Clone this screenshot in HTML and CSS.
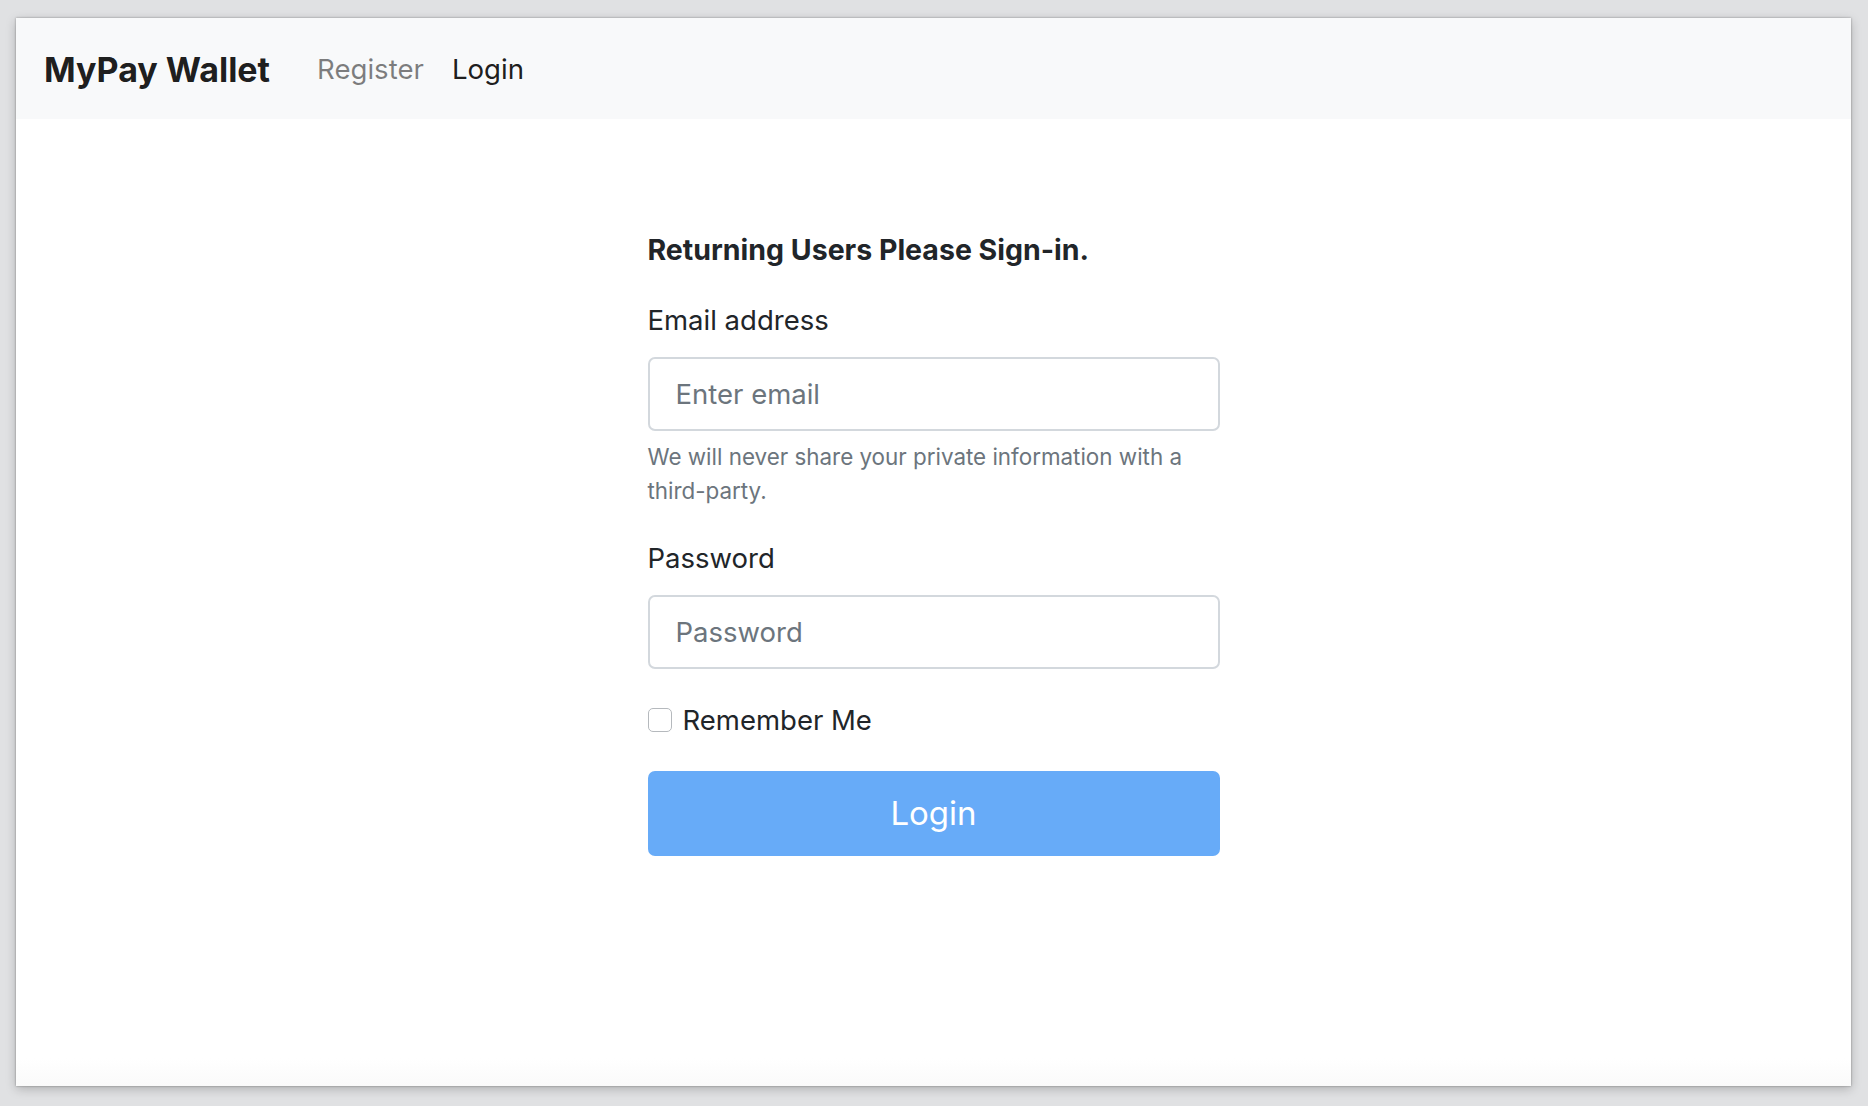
FILE: index.html
```html
<!DOCTYPE html>
<html lang="en">
<head>
<meta charset="utf-8">
<title>MyPay Wallet</title>
<link rel="stylesheet" href="styles.css">
</head>
<body>
<div class="window">
  <nav class="navbar">
    <a class="brand" href="#">MyPay Wallet</a>
    <ul class="nav">
      <li><a class="nav-link" href="#">Register</a></li>
      <li><a class="nav-link active" href="#">Login</a></li>
    </ul>
  </nav>
  <main class="content">
    <form class="login-form">
      <h6 class="form-title">Returning Users Please Sign-in.</h6>
      <div class="form-group">
        <label class="form-label" for="email">Email address</label>
        <input class="form-control" type="email" id="email" placeholder="Enter email">
        <small class="form-text">We will never share your private information with a third-party.</small>
      </div>
      <div class="form-group">
        <label class="form-label" for="password">Password</label>
        <input class="form-control" type="password" id="password" placeholder="Password">
      </div>
      <div class="form-check">
        <input class="check-input" type="checkbox" id="remember">
        <label class="check-label" for="remember">Remember Me</label>
      </div>
      <button class="btn-login" type="submit" disabled>Login</button>
    </form>
  </main>
</div>
</body>
</html>
```
FILE: styles.css
```css
* { box-sizing: border-box; }
html, body { margin: 0; padding: 0; }
body {
  background: #e0e1e3;
  height: 1106px;
  padding: 18px 17px 20px 16px;
  font-family: Inter, "Noto Sans", "Liberation Sans", sans-serif;
  color: #212529;
  overflow: hidden;
}
.window {
  height: 1068px;
  background: linear-gradient(to bottom, #ffffff 0, #ffffff 1040px, #fafafa 1068px);
  box-shadow: 0 0 2px rgba(0,0,0,0.35), 0 3px 10px rgba(0,0,0,0.22);
  display: flex;
  flex-direction: column;
}
.navbar {
  height: 101px;
  background: #f8f9fa;
  display: flex;
  align-items: center;
  padding: 1px 28px 0;
}
.brand {
  font-size: 34px;
  font-weight: 700;
  color: rgba(0,0,0,0.9);
  text-decoration: none;
  margin-right: 33px;
}
.nav {
  list-style: none;
  margin: 0;
  padding: 0;
  display: flex;
}
.nav-link {
  display: block;
  padding: 0 14px;
  font-size: 27.6px;
  color: rgba(0,0,0,0.5);
  text-decoration: none;
}
.nav-link.active { color: rgba(0,0,0,0.9); }
.content {
  flex: 1;
  padding-top: 113px;
}
.login-form {
  width: 572px;
  margin: 0 auto;
}
.form-title {
  margin: 0 0 32px;
  font-size: 28.5px;
  line-height: 35px;
  font-weight: 700;
  color: #212529;
}
.form-group { margin-bottom: 30px; }
.form-label {
  display: block;
  font-size: 27.5px;
  line-height: 42px;
  margin-bottom: 15.5px;
}
.form-control {
  display: block;
  width: 100%;
  height: 74px;
  padding: 0 26px;
  font-family: inherit;
  font-size: 27.5px;
  color: #495057;
  background: #fff;
  border: 2px solid #d3d8dd;
  border-radius: 7px;
  outline: none;
}
.form-control::placeholder { color: #6c757d; opacity: 1; }
.form-text {
  display: block;
  margin-top: 9.5px;
  font-size: 22.4px;
  line-height: 33.6px;
  color: #6c757d;
}
.form-group + .form-group { margin-bottom: 30px; }
.form-check {
  display: flex;
  align-items: center;
  height: 42px;
  margin-bottom: 30px;
}
.check-input {
  appearance: none;
  -webkit-appearance: none;
  width: 24px;
  height: 24px;
  margin: 0 11px 0 0;
  border: 1.5px solid #b5b9bd;
  border-radius: 5px;
  background: #fff;
}
.check-label {
  font-size: 27.5px;
  line-height: 42px;
}
.btn-login {
  display: block;
  width: 100%;
  height: 85px;
  border: none;
  border-radius: 7px;
  background: #67abf8;
  color: #fff;
  font-family: inherit;
  font-size: 33px;
  padding: 0;
}
```
